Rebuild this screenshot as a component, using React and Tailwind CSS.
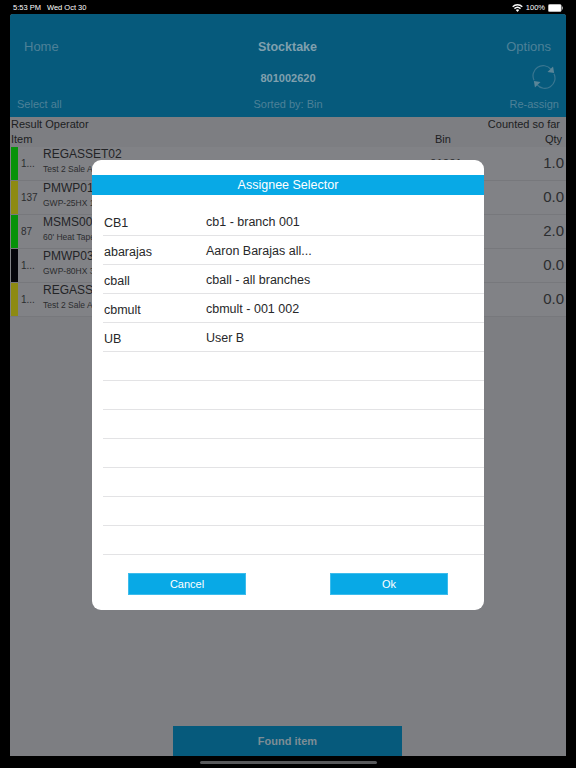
const font = { fontFamily: '"Liberation Sans", Arial, sans-serif' };

const items = [
  { bar: 'bg-[#069209]', num: '1...', code: 'REGASSET02', desc: 'Test 2 Sale Asset', bin: '01001', qty: '1.0' },
  { bar: 'bg-[#8d8a12]', num: '137', code: 'PMWP01', desc: 'GWP-25HX 1', bin: '', qty: '0.0' },
  { bar: 'bg-[#069209]', num: '87', code: 'MSMS00', desc: "60' Heat Tape", bin: '', qty: '2.0' },
  { bar: 'bg-[#05060a]', num: '1...', code: 'PMWP03', desc: 'GWP-80HX 3', bin: '', qty: '0.0' },
  { bar: 'bg-[#8d8a12]', num: '1...', code: 'REGASS', desc: 'Test 2 Sale Asset', bin: '', qty: '0.0' },
];

const assignees = [
  ['CB1', 'cb1 - branch 001'],
  ['abarajas', 'Aaron Barajas all...'],
  ['cball', 'cball - all branches'],
  ['cbmult', 'cbmult - 001 002'],
  ['UB', 'User B'],
  ['', ''], ['', ''], ['', ''], ['', ''], ['', ''], ['', ''], ['', ''],
];

function Wifi() {
  return (
    <svg width="11" height="8" viewBox="0 0 22 16" fill="white">
      <path d="M11 16 7.6 12.2a5 5 0 0 1 6.8 0Z" />
      <path d="M5.9 10.4 3.9 8.2a10.6 10.6 0 0 1 14.2 0l-2 2.2a7.6 7.6 0 0 0-10.2 0Z" />
      <path d="M2.3 6.4.4 4.3a15.8 15.8 0 0 1 21.2 0l-1.9 2.1a13 13 0 0 0-17.4 0Z" />
    </svg>
  );
}

function Battery() {
  return (
    <svg width="15" height="8" viewBox="0 0 30 16">
      <rect x="0.5" y="0.5" width="26" height="15" rx="3" fill="white" stroke="#aaa" />
      <rect x="27.5" y="5" width="2.5" height="6" rx="1" fill="#999" />
    </svg>
  );
}

function Sync() {
  return (
    <svg width="24" height="24" viewBox="0 0 26 26" fill="none">
      <path d="M2.2 16.5A11 11 0 0 1 20.5 4.6" stroke="#3a7690" strokeWidth="1.3" />
      <path d="M23.8 9.5A11 11 0 0 1 5.5 21.4" stroke="#3a7690" strokeWidth="1.3" />
      <path d="M22.8 1.5 24 8.6 16.8 7.6Z" fill="#5a8598" />
      <path d="M3.2 24.5 2 17.4 9.2 18.4Z" fill="#5a8598" />
    </svg>
  );
}

export default function App() {
  return (
    <div style={font} className="relative w-[576px] h-[768px] bg-black overflow-hidden flex flex-col">
      <div className="h-[14px] flex items-center justify-between pl-[13px] pr-[13px] text-white text-[7.5px] shrink-0 pt-[1px]">
        <div className="flex gap-[6px]"><span>5:53 PM</span><span>Wed Oct 30</span></div>
        <div className="flex items-center gap-[3px]"><Wifi /><span>100%</span><Battery /></div>
      </div>

      <div className="mx-[10px] w-[556px] h-[742px] rounded-t-[3px] bg-[#7d7e82] flex flex-col overflow-hidden">
        <div className="h-[103px] bg-[#065a7c] flex flex-col shrink-0">
          <div className="h-[58px] grid grid-cols-[1fr_auto_1fr] items-center pl-[14px] pr-[15px] pt-[8px] shrink-0">
            <span className="text-[13px] text-[#4d8198]">Home</span>
            <span className="text-[12.5px] font-bold text-[#80a0ae]">Stocktake</span>
            <span className="text-[13px] text-[#4d8198] text-right">Options</span>
          </div>
          <div className="relative h-[12px] flex justify-center items-center shrink-0">
            <span className="text-[11px] font-bold text-[#80a0ae]">801002620</span>
            <div className="absolute right-[10px] top-[-7px]"><Sync /></div>
          </div>
          <div className="flex-1 flex items-center justify-between pl-[7px] pr-[7px] pt-[7px] text-[11px] text-[#4d8198]">
            <span>Select all</span>
            <span className="pl-[5px]">Sorted by: Bin</span>
            <span>Re-assign</span>
          </div>
        </div>

        <div className="h-[30px] shrink-0 text-[11px] text-[#1c1d1f] leading-[14.5px] pl-[1px] pr-[4px]">
          <div className="flex justify-between pr-[2px]"><span>Result Operator</span><span>Counted so far</span></div>
          <div className="flex">
            <span className="flex-1">Item</span>
            <span className="w-[16px] mr-[94px]">Bin</span>
            <span>Qty</span>
          </div>
        </div>

        <div className="flex flex-col">
          {items.map((it, i) => (
            <div key={i} className="h-[34px] bg-[#818286] border-b border-[#77787c] flex shrink-0">
              <div className={`w-[7px] ml-[1px] h-[33px] ${it.bar}`} />
              <div className="w-[25px] pl-[3px] flex items-center text-[10px] text-[#2c2d2f]">{it.num}</div>
              <div className="flex-1">
                <div className="text-[12px] leading-[15px] text-[#232426]">{it.code}</div>
                <div className="text-[8.5px] leading-[13px] mt-[1px] text-[#2c2d2f]">{it.desc}</div>
              </div>
              <div className="mr-[64px] flex items-center text-[11.5px] text-[#2c2d2f]">{it.bin}</div>
              <div className="w-[40px] text-[15px] flex items-center justify-end pr-[2px] text-[#2c2d2f]">{it.qty}</div>
            </div>
          ))}
        </div>

        <div className="mt-auto ml-[163px] w-[229px] h-[30px] bg-[#065a7c] flex items-center justify-center text-[11px] font-bold text-[#7d8d95]">
          Found item
        </div>
      </div>

      <div className="h-[12px] shrink-0 flex justify-center items-center">
        <div className="w-[177px] h-[3px] rounded-full bg-[#58595b]" />
      </div>

      <div className="absolute left-[92px] top-[160px] w-[392px] h-[450px] bg-white rounded-[9px] flex flex-col pt-[15px]">
        <div className="h-[20px] bg-[#08a9e6] flex items-center justify-center text-[12.5px] text-white shrink-0">
          Assignee Selector
        </div>
        <div className="mt-[12px] ml-[11px] flex flex-col">
          {assignees.map(([a, b], i) => (
            <div key={i} className="h-[29px] border-b border-[#e3e3e5] flex text-[12.5px] text-[#27282a] shrink-0">
              <span className="w-[103px] pt-[7px] pl-[1px]">{a}</span>
              <span className="pt-[6px]">{b}</span>
            </div>
          ))}
        </div>
        <div className="mt-[18px] pl-[36px] pr-[36px] flex justify-between">
          <button className="w-[118px] h-[22px] bg-[#08a9e6] border border-[#3dbcec] text-white text-[11px]">Cancel</button>
          <button className="w-[118px] h-[22px] bg-[#08a9e6] border border-[#3dbcec] text-white text-[11px]">Ok</button>
        </div>
      </div>
    </div>
  );
}
